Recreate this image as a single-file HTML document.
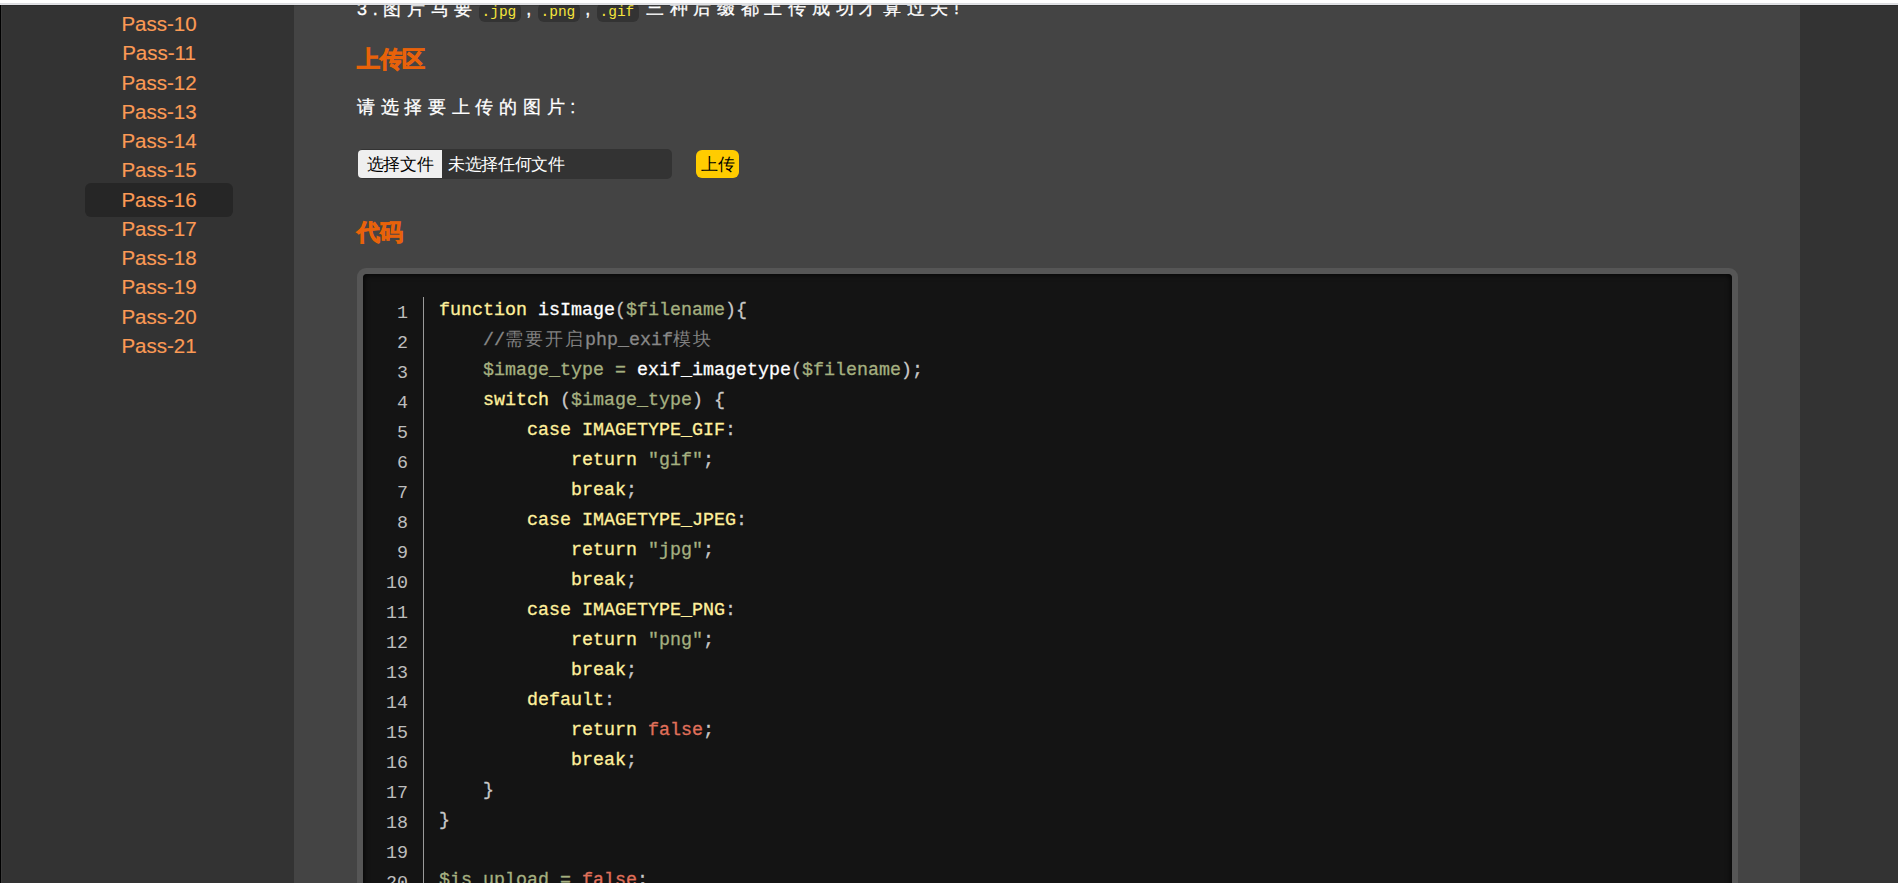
<!DOCTYPE html>
<html><head><meta charset="utf-8">
<style>
*{margin:0;padding:0;box-sizing:border-box}
html,body{width:1898px;height:883px;overflow:hidden;background:#333}
body{position:relative;font-family:"Liberation Sans",sans-serif}
.abs{position:absolute}
#side{left:0;top:0;width:294px;height:883px;background:#333}
#side .l0{left:0;top:0;width:1px;height:883px;background:#000}
#side .l1{left:1px;top:0;width:1px;height:883px;background:#3b3b3b}
#main{left:294px;top:0;width:1506px;height:883px;background:#444}
#right{left:1800px;top:0;width:98px;height:883px;background:#333}
#top{left:0;top:0;width:1898px;height:3px;background:#fff}
#top2{left:0;top:3px;width:1898px;height:1px;background:#dcdde0}
#top3{left:0;top:4px;width:1898px;height:1px;background:#e2e3e7}
#top4{left:0;top:5px;width:1898px;height:1px;background:rgba(0,0,0,0.15)}
.nav{left:85px;width:148px;height:29.25px;text-align:center;font-size:20.5px;color:#fb9a55;line-height:29.25px;-webkit-text-stroke:0.15px currentColor}
.hl{left:85px;top:183px;width:148px;height:34px;background:#262626;border-radius:6px}
.txt{color:#fff;font-size:18px;letter-spacing:5.7px;white-space:nowrap;-webkit-text-stroke:0.3px currentColor}
.h2{color:#e8620a;font-size:22.5px;font-weight:bold;white-space:nowrap;-webkit-text-stroke:0.9px currentColor}
.chip{background:#333;border-radius:6px}
.ctx{color:#f5e53c;font-family:"Liberation Mono",monospace;font-size:14.5px;line-height:22px;white-space:nowrap}
#codebox{left:357px;top:268px;width:1381px;height:700px;background:#565656;border-radius:9px}
#codein{left:363px;top:274px;width:1369px;height:700px;background:#141414;border-radius:4px;box-shadow:inset 0 0 6px #000}
#sep{left:423px;top:297px;width:1px;height:600px;background:#9a9a9a}
.ln{left:361px;width:47px;text-align:right;font-family:"Liberation Mono",monospace;font-size:18.33px;color:#bdbdbd;height:30px;line-height:30px}
.cl{left:439px;font-family:"Liberation Mono",monospace;font-size:18.33px;color:#ddd;-webkit-text-stroke:0.3px currentColor;height:30px;line-height:30px;white-space:pre}
.k{color:#fff09c}
.f{color:#fff}
.v{color:#a5b080}
.s{color:#a5b080}
.c{color:#888}
.cj{color:#808080;letter-spacing:1.67px;-webkit-text-stroke:0}
.r{color:#e0705a}
.p{color:#c8c8c8}
i{font-style:normal;display:inline-block;letter-spacing:0;text-align:left}
.txt i{width:23.7px}
.h2 i{width:22.5px}
.cj i{width:20px}
.btn i{width:16.7px}
</style></head><body>
<div id="side" class="abs"><div class="abs l0"></div><div class="abs l1"></div></div>
<div id="main" class="abs"></div>
<div id="right" class="abs"></div>

<div class="abs hl"></div>
<div class="abs nav" style="top:9px">Pass-10</div>
<div class="abs nav" style="top:38.25px">Pass-11</div>
<div class="abs nav" style="top:67.5px">Pass-12</div>
<div class="abs nav" style="top:96.75px">Pass-13</div>
<div class="abs nav" style="top:126px">Pass-14</div>
<div class="abs nav" style="top:155.25px">Pass-15</div>
<div class="abs nav" style="top:184.5px">Pass-16</div>
<div class="abs nav" style="top:213.75px">Pass-17</div>
<div class="abs nav" style="top:243px">Pass-18</div>
<div class="abs nav" style="top:272.25px">Pass-19</div>
<div class="abs nav" style="top:301.5px">Pass-20</div>
<div class="abs nav" style="top:330.75px">Pass-21</div>

<div class="abs txt" style="left:357px;top:-4.5px;line-height:26px">3.<i>图</i><i>片</i><i>马</i><i>要</i></div>
<div class="abs chip" style="left:479px;top:3px;width:42px;height:19px"></div>
<div class="abs chip" style="left:538px;top:3px;width:42px;height:19px"></div>
<div class="abs chip" style="left:597px;top:3px;width:42px;height:19px"></div>
<div class="abs ctx" style="left:481.5px;top:0.5px">.jpg</div>
<div class="abs ctx" style="left:540.5px;top:0.5px">.png</div>
<div class="abs ctx" style="left:599.5px;top:0.5px">.gif</div>
<div class="abs txt" style="left:526.3px;top:-4.5px;line-height:26px">,</div>
<div class="abs txt" style="left:585.3px;top:-4.5px;line-height:26px">,</div>
<div class="abs txt" style="left:646px;top:-5px;line-height:26px"><i>三</i><i>种</i><i>后</i><i>缀</i><i>都</i><i>上</i><i>传</i><i>成</i><i>功</i><i>才</i><i>算</i><i>过</i><i>关</i>!</div>
<div class="abs h2" style="left:357px;top:45px;line-height:30px"><i>上</i><i>传</i><i>区</i></div>
<div class="abs txt" style="left:357px;top:94px;line-height:26px"><i>请</i><i>选</i><i>择</i><i>要</i><i>上</i><i>传</i><i>的</i><i>图</i><i>片</i>:</div>

<div class="abs" style="left:358px;top:149px;width:314px;height:30px;background:#333;border-radius:5px"></div>
<div class="abs btn" style="left:358px;top:150px;width:84px;height:28px;background:#efefef;border-radius:4px 0 0 4px;font-size:16.5px;color:#000;line-height:28px;text-align:center"><i>选</i><i>择</i><i>文</i><i>件</i></div>
<div class="abs btn" style="left:448px;top:150px;height:28px;font-size:16.5px;color:#fff;line-height:28px;white-space:nowrap"><i>未</i><i>选</i><i>择</i><i>任</i><i>何</i><i>文</i><i>件</i></div>
<div class="abs btn" style="left:696px;top:149.5px;width:43px;height:28.5px;background:#fc0;border-radius:6px;font-size:16.5px;color:#000;line-height:28px;text-align:center"><i>上</i><i>传</i></div>

<div class="abs h2" style="left:357px;top:217.5px;line-height:30px"><i>代</i><i>码</i></div>

<div id="codebox" class="abs"></div>
<div id="codein" class="abs"></div>
<div id="sep" class="abs"></div>
<div id="code">
<div class="abs ln" style="top:298.62px">1</div>
<div class="abs cl" style="top:295.62px"><span class="k">function</span> <span class="f">isImage</span><span class="p">(</span><span class="v">$filename</span><span class="p">){</span></div>
<div class="abs ln" style="top:328.62px">2</div>
<div class="abs cl" style="top:325.62px">    <span class="c">//</span><span class="cj"><i>需</i><i>要</i><i>开</i><i>启</i></span><span class="c">php_exif</span><span class="cj"><i>模</i><i>块</i></span></div>
<div class="abs ln" style="top:358.62px">3</div>
<div class="abs cl" style="top:355.62px">    <span class="v">$image_type</span> <span class="v">=</span> <span class="f">exif_imagetype</span><span class="p">(</span><span class="v">$filename</span><span class="p">);</span></div>
<div class="abs ln" style="top:388.62px">4</div>
<div class="abs cl" style="top:385.62px">    <span class="k">switch</span> <span class="p">(</span><span class="v">$image_type</span><span class="p">)</span> <span class="p">{</span></div>
<div class="abs ln" style="top:418.62px">5</div>
<div class="abs cl" style="top:415.62px">        <span class="k">case</span> <span class="k">IMAGETYPE_GIF</span><span class="p">:</span></div>
<div class="abs ln" style="top:448.62px">6</div>
<div class="abs cl" style="top:445.62px">            <span class="k">return</span> <span class="s">"gif"</span><span class="p">;</span></div>
<div class="abs ln" style="top:478.62px">7</div>
<div class="abs cl" style="top:475.62px">            <span class="k">break</span><span class="p">;</span></div>
<div class="abs ln" style="top:508.62px">8</div>
<div class="abs cl" style="top:505.62px">        <span class="k">case</span> <span class="k">IMAGETYPE_JPEG</span><span class="p">:</span></div>
<div class="abs ln" style="top:538.62px">9</div>
<div class="abs cl" style="top:535.62px">            <span class="k">return</span> <span class="s">"jpg"</span><span class="p">;</span></div>
<div class="abs ln" style="top:568.62px">10</div>
<div class="abs cl" style="top:565.62px">            <span class="k">break</span><span class="p">;</span></div>
<div class="abs ln" style="top:598.62px">11</div>
<div class="abs cl" style="top:595.62px">        <span class="k">case</span> <span class="k">IMAGETYPE_PNG</span><span class="p">:</span></div>
<div class="abs ln" style="top:628.62px">12</div>
<div class="abs cl" style="top:625.62px">            <span class="k">return</span> <span class="s">"png"</span><span class="p">;</span></div>
<div class="abs ln" style="top:658.62px">13</div>
<div class="abs cl" style="top:655.62px">            <span class="k">break</span><span class="p">;</span></div>
<div class="abs ln" style="top:688.62px">14</div>
<div class="abs cl" style="top:685.62px">        <span class="k">default</span><span class="p">:</span></div>
<div class="abs ln" style="top:718.62px">15</div>
<div class="abs cl" style="top:715.62px">            <span class="k">return</span> <span class="r">false</span><span class="p">;</span></div>
<div class="abs ln" style="top:748.62px">16</div>
<div class="abs cl" style="top:745.62px">            <span class="k">break</span><span class="p">;</span></div>
<div class="abs ln" style="top:778.62px">17</div>
<div class="abs cl" style="top:775.62px">    <span class="p">}</span></div>
<div class="abs ln" style="top:808.62px">18</div>
<div class="abs cl" style="top:805.62px"><span class="p">}</span></div>
<div class="abs ln" style="top:838.62px">19</div>
<div class="abs cl" style="top:835.62px"></div>
<div class="abs ln" style="top:868.62px">20</div>
<div class="abs cl" style="top:865.62px"><span class="v">$is_upload</span> <span class="v">=</span> <span class="r">false</span><span class="p">;</span></div>
</div>
<div id="top" class="abs"></div><div id="top2" class="abs"></div><div id="top3" class="abs"></div><div id="top4" class="abs"></div>
</body></html>
